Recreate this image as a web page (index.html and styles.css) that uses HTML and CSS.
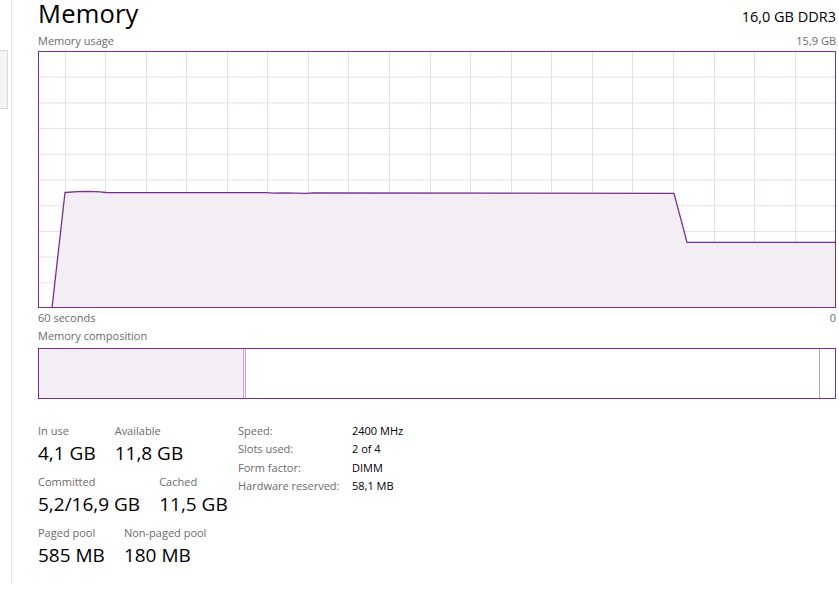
FILE: index.html
```html
<!DOCTYPE html>
<html lang="en">
<head>
<meta charset="utf-8">
<title>Memory</title>
<link rel="stylesheet" href="styles.css">
</head>
<body>
<div class="app">
  <aside class="sidebar">
    <div class="side-item"></div>
  </aside>
  <main class="main">
    <header class="header">
      <h1 class="title">Memory</h1>
      <div class="subtitle">16,0 GB DDR3</div>
    </header>
    <div class="caption-row">
      <span>Memory usage</span>
      <span>15,9 GB</span>
    </div>
    <div class="graph">
      <svg width="798" height="257" viewBox="0 0 798 257" xmlns="http://www.w3.org/2000/svg">
        <g class="grid">
          <line x1="27.5" y1="0" x2="27.5" y2="257"/>
          <line x1="67.5" y1="0" x2="67.5" y2="257"/>
          <line x1="108.5" y1="0" x2="108.5" y2="257"/>
          <line x1="148.5" y1="0" x2="148.5" y2="257"/>
          <line x1="189.5" y1="0" x2="189.5" y2="257"/>
          <line x1="229.5" y1="0" x2="229.5" y2="257"/>
          <line x1="270.5" y1="0" x2="270.5" y2="257"/>
          <line x1="310.5" y1="0" x2="310.5" y2="257"/>
          <line x1="351.5" y1="0" x2="351.5" y2="257"/>
          <line x1="392.5" y1="0" x2="392.5" y2="257"/>
          <line x1="432.5" y1="0" x2="432.5" y2="257"/>
          <line x1="473.5" y1="0" x2="473.5" y2="257"/>
          <line x1="513.5" y1="0" x2="513.5" y2="257"/>
          <line x1="554.5" y1="0" x2="554.5" y2="257"/>
          <line x1="594.5" y1="0" x2="594.5" y2="257"/>
          <line x1="635.5" y1="0" x2="635.5" y2="257"/>
          <line x1="676.5" y1="0" x2="676.5" y2="257"/>
          <line x1="716.5" y1="0" x2="716.5" y2="257"/>
          <line x1="757.5" y1="0" x2="757.5" y2="257"/>
          <line x1="0" y1="26.2" x2="798" y2="26.2"/>
          <line x1="0" y1="51.9" x2="798" y2="51.9"/>
          <line x1="0" y1="77.6" x2="798" y2="77.6"/>
          <line x1="0" y1="103.3" x2="798" y2="103.3"/>
          <line x1="0" y1="129" x2="798" y2="129"/>
          <line x1="0" y1="154.7" x2="798" y2="154.7"/>
          <line x1="0" y1="180.4" x2="798" y2="180.4"/>
          <line x1="0" y1="206.1" x2="798" y2="206.1"/>
          <line x1="0" y1="231.8" x2="798" y2="231.8"/>
        </g>
        <path class="area" d="M14 257 L27 141.5 L40 140.6 L50 140.3 L62 140.8 L68 141.5 L228 141.6 L236 142.2 L246 141.8 L268 142.4 L276 141.8 L636 142.3 L649 191.3 L798 191.3 L798 257 Z"/>
        <path class="line" d="M14 257 L27 141.5 L40 140.6 L50 140.3 L62 140.8 L68 141.5 L228 141.6 L236 142.2 L246 141.8 L268 142.4 L276 141.8 L636 142.3 L649 191.3 L797 191.3"/>
        <rect class="frame" x="0.5" y="0.5" width="797" height="256"/>
      </svg>
    </div>
    <div class="caption-row axis">
      <span>60 seconds</span>
      <span>0</span>
    </div>
    <div class="caption-row comp-caption">
      <span>Memory composition</span>
    </div>
    <div class="composition">
      <div class="seg seg-inuse"></div>
      <div class="seg seg-modified"></div>
      <div class="seg seg-standby"></div>
      <div class="seg seg-free"></div>
    </div>
    <section class="stats">
      <div class="stats-left">
        <div class="stat-row">
          <div class="stat">
            <div class="stat-label">In use</div>
            <div class="stat-value">4,1 GB</div>
          </div>
          <div class="stat">
            <div class="stat-label">Available</div>
            <div class="stat-value">11,8 GB</div>
          </div>
        </div>
        <div class="stat-row">
          <div class="stat">
            <div class="stat-label">Committed</div>
            <div class="stat-value">5,2/16,9 GB</div>
          </div>
          <div class="stat">
            <div class="stat-label">Cached</div>
            <div class="stat-value">11,5 GB</div>
          </div>
        </div>
        <div class="stat-row">
          <div class="stat">
            <div class="stat-label">Paged pool</div>
            <div class="stat-value">585 MB</div>
          </div>
          <div class="stat">
            <div class="stat-label">Non-paged pool</div>
            <div class="stat-value">180 MB</div>
          </div>
        </div>
      </div>
      <dl class="details">
        <dt>Speed:</dt><dd>2400 MHz</dd>
        <dt>Slots used:</dt><dd>2 of 4</dd>
        <dt>Form factor:</dt><dd>DIMM</dd>
        <dt>Hardware reserved:</dt><dd>58,1 MB</dd>
      </dl>
    </section>
  </main>
</div>
</body>
</html>
```

FILE: styles.css
```css
* {
  box-sizing: border-box;
}

html, body {
  margin: 0;
  padding: 0;
  background: #ffffff;
}

body {
  font-family: "Open Sans", "Noto Sans", sans-serif;
  color: #000000;
  width: 839px;
  height: 592px;
  overflow: hidden;
}

.app {
  display: flex;
  align-items: flex-start;
}

.sidebar {
  width: 12px;
  height: 583px;
  border-right: 1px solid #e3e3e3;
  padding-top: 50px;
}

.side-item {
  width: 8px;
  height: 59px;
  background: #f4f4f4;
  border: 1px solid #dadada;
  border-left: none;
}

.main {
  width: 824px;
  padding-left: 26px;
}

.header {
  display: flex;
  justify-content: space-between;
  align-items: flex-start;
  width: 798px;
  height: 26px;
}

.title {
  margin: 0;
  font-size: 25.5px;
  font-weight: 400;
  line-height: 26px;
  letter-spacing: 0.2px;
}

.subtitle {
  font-size: 14.5px;
  line-height: 18px;
  padding-top: 8px;
}

.caption-row {
  display: flex;
  justify-content: space-between;
  width: 798px;
  font-size: 11px;
  line-height: 14px;
  color: #6b6b6b;
  margin-top: 8px;
}

.graph {
  margin-top: 3px;
  width: 798px;
  height: 257px;
}

.graph svg {
  display: block;
}

.grid line {
  stroke: #e6dfe9;
  stroke-width: 1;
}

.area {
  fill: #f2eef4;
}

.line {
  fill: none;
  stroke: #7a2d90;
  stroke-width: 1.3;
  stroke-linejoin: round;
}

.frame {
  fill: none;
  stroke: #7a2d90;
  stroke-width: 1;
}

.caption-row.axis {
  margin-top: 3px;
}

.caption-row.comp-caption {
  margin-top: 4px;
}

.composition {
  display: flex;
  margin-top: 5px;
  width: 798px;
  height: 51px;
  border: 1px solid #7a2d90;
}

.seg-inuse {
  width: 204px;
  background: #f2eef4;
}

.seg-modified {
  width: 3px;
  background: #f2eef4;
  border-left: 1px solid #c7a3d2;
  border-right: 1px solid #c7a3d2;
}

.seg-standby {
  flex: 1;
  background: #ffffff;
  border-right: 1px solid #a9a9a9;
}

.seg-free {
  width: 15px;
  background: #ffffff;
}

.stats {
  display: flex;
  align-items: flex-start;
  margin-top: 23px;
}

.stats-left {
  width: 200px;
  padding-top: 2px;
  display: flex;
  flex-direction: column;
  gap: 9px;
}

.stat-row {
  display: flex;
  gap: 19px;
}

.stat-label {
  font-size: 11px;
  line-height: 14px;
  color: #6b6b6b;
}

.stat-value {
  margin-top: 3px;
  font-size: 19px;
  line-height: 25px;
}

.details {
  margin: 0;
  display: grid;
  grid-template-columns: 114px auto;
  font-size: 11px;
  line-height: 18.3px;
}

.details dt {
  color: #6b6b6b;
}

.details dd {
  margin: 0;
  color: #000000;
}
```
